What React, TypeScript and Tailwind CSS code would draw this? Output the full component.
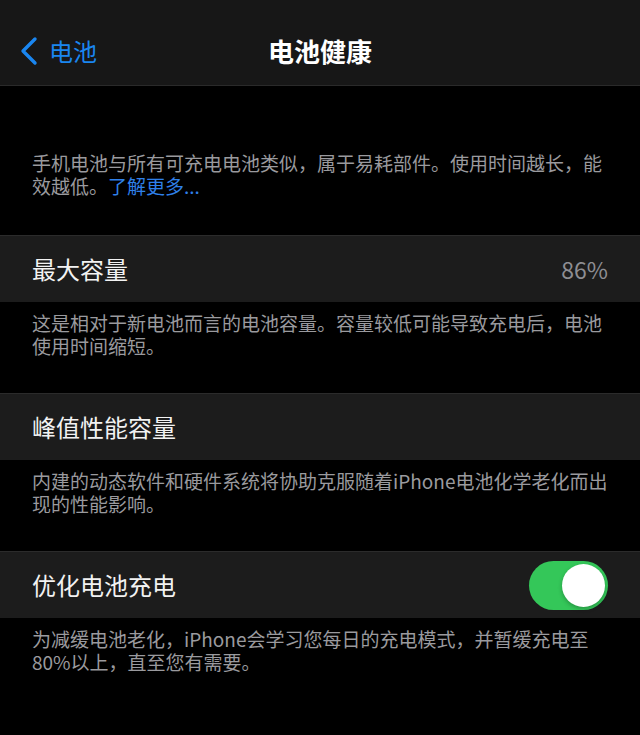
import { useState } from 'react'

const font = { fontFamily: '"Noto Sans CJK SC", "Noto Sans", sans-serif' }

function Row({ title, children }: { title: string; children?: React.ReactNode }) {
  return (
    <div className="flex h-[67px] items-center justify-between border-t border-[#2b2b2b] bg-[#1c1c1c] px-8">
      <span className="text-[24px] text-[#f2f2f2]">{title}</span>
      {children}
    </div>
  )
}

function Note({ children }: { children: React.ReactNode }) {
  return (
    <p className="px-8 pt-[9px] pb-[36px] text-[19px] leading-[23px] text-[#9a9a9e]">{children}</p>
  )
}

function Toggle({ on, onChange }: { on: boolean; onChange: (v: boolean) => void }) {
  return (
    <button
      onClick={() => onChange(!on)}
      className={`relative h-[49px] w-[79px] rounded-full transition-colors ${on ? 'bg-[#34c759]' : 'bg-[#39393d]'}`}
    >
      <span
        className={`absolute top-[3px] h-[43px] w-[43px] rounded-full bg-white shadow-[0_2px_4px_rgba(0,0,0,0.25)] transition-all ${on ? 'right-[3px]' : 'left-[3px]'}`}
      />
    </button>
  )
}

export default function App() {
  const [optimized, setOptimized] = useState(true)

  return (
    <div className="min-h-screen bg-black" style={font}>
      {/* navigation bar */}
      <div className="grid h-[86px] grid-cols-[1fr_auto_1fr] items-center border-b border-[#2a2a2a] bg-[#171717] pt-[16px]">
        <button className="flex items-center gap-[10px] pl-[19px] text-[#1a86f0]">
          <svg width="20" height="30" viewBox="0 0 20 30" fill="none">
            <path d="M16 3 L4 15 L16 27" stroke="currentColor" strokeWidth="3.4" strokeLinecap="round" strokeLinejoin="round" />
          </svg>
          <span className="text-[24px]">电池</span>
        </button>
        <h1 className="text-[26px] font-semibold text-white">电池健康</h1>
        <div />
      </div>

      <div className="px-8 pt-[65px] pb-[38px] text-[19px] leading-[23px] text-[#9a9a9e]">
        手机电池与所有可充电电池类似，属于易耗部件。使用时间越长，能效越低。<a className="text-[#2f80ea]">了解更多...</a>
      </div>

      <Row title="最大容量">
        <span className="text-[23px] text-[#8e8e93]">86%</span>
      </Row>
      <Note>这是相对于新电池而言的电池容量。容量较低可能导致充电后，电池使用时间缩短。</Note>

      <Row title="峰值性能容量" />
      <Note>内建的动态软件和硬件系统将协助克服随着iPhone电池化学老化而出现的性能影响。</Note>

      <Row title="优化电池充电">
        <Toggle on={optimized} onChange={setOptimized} />
      </Row>
      <Note>为减缓电池老化，iPhone会学习您每日的充电模式，并暂缓充电至80%以上，直至您有需要。</Note>
    </div>
  )
}
